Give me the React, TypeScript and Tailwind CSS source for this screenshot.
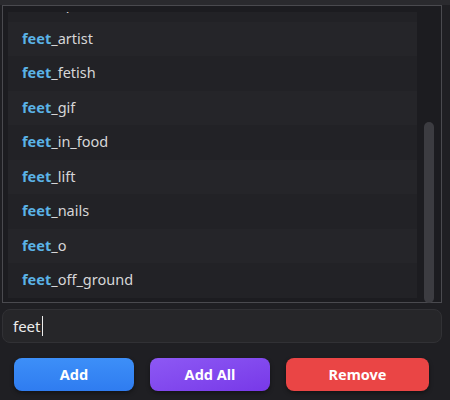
import React from 'react';

const items = [
  'feet_apart',
  'feet_artist',
  'feet_fetish',
  'feet_gif',
  'feet_in_food',
  'feet_lift',
  'feet_nails',
  'feet_o',
  'feet_off_ground',
];

function TagRow({ tag, index }: { tag: string; index: number }) {
  const rest = tag.slice(4);
  return (
    <div
      className={`h-[34.5px] flex items-center pl-[14px] shrink-0 ${
        index % 2 === 0 ? 'bg-[#222226]' : 'bg-[#252529]'
      }`}
    >
      <span className="text-[14.5px] text-[#d6d6d8]">
        <span className="font-bold text-[#5bb3e6]">feet</span>
        {rest}
      </span>
    </div>
  );
}

export default function App() {
  return (
    <div
      className="w-[450px] h-[400px] bg-[#1f1f23] flex flex-col overflow-hidden"
      style={{ fontFamily: '"Noto Sans", "Open Sans", sans-serif' }}
    >
      {/* top strip */}
      <div className="h-[5px] bg-[#2a2a2e] shrink-0" />

      {/* list panel */}
      <div className="mx-[2px] mr-[8px] h-[298px] border border-[#4a4a4f] bg-[#1c1c20] flex pt-[6px] pb-[4px] pl-[5px] shrink-0">
        <div className="flex-1 overflow-hidden bg-[#242428]">
          <div className="flex flex-col -mt-[25px]">
            {items.map((t, i) => (
              <TagRow key={t} tag={t} index={i} />
            ))}
          </div>
        </div>
        <div className="w-[24px] flex justify-center pt-[110px]">
          <div className="w-[10px] h-[181px] rounded-full bg-[#3c3c41]" />
        </div>
      </div>

      {/* input */}
      <div className="mx-[2px] mr-[8px] mt-[6px] h-[34px] rounded-lg border border-[#313135] bg-[#262629] flex items-center pl-[10px] shrink-0">
        <span className="text-[15px] text-[#ececec]">feet</span>
        <span className="w-[1.5px] h-[20px] bg-[#ececec] ml-[1px]" />
      </div>

      {/* buttons */}
      <div className="flex gap-4 pl-[14px] mt-[15px]">
        <button className="w-[120px] h-[33px] rounded-lg bg-gradient-to-b from-[#3d8ff8] to-[#2f7cf0] text-white font-bold text-[14.5px] shadow-[0_2px_4px_rgba(0,0,0,0.4)]">
          Add
        </button>
        <button className="w-[120px] h-[33px] rounded-lg bg-gradient-to-br from-[#8d58f4] to-[#7838e8] text-white font-bold text-[14.5px] shadow-[0_2px_4px_rgba(0,0,0,0.4)]">
          Add All
        </button>
        <button className="w-[143px] h-[33px] rounded-lg bg-[#ea4545] text-white font-bold text-[14.5px] shadow-[0_2px_4px_rgba(0,0,0,0.4)]">
          Remove
        </button>
      </div>
    </div>
  );
}
